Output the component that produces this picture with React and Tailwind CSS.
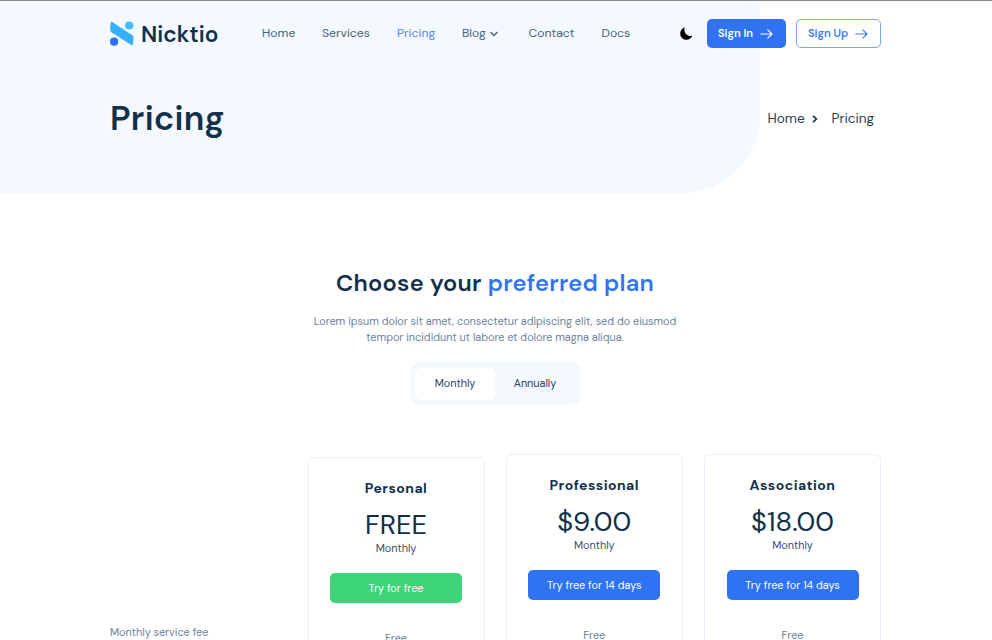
import React from "react";

const NAV = [
  { label: "Home", box: "w-[60px]" },
  { label: "Services", box: "w-[75px]" },
  { label: "Pricing", box: "w-[65px]", text: "text-[#4a86f7]" },
  { label: "Blog", box: "w-[66.5px]", menu: true },
  { label: "Contact", box: "w-[73px]" },
  { label: "Docs", box: "w-[40px]" },
];

const PLANS = [
  { name: "Personal", price: "FREE", cta: "Try for free", card: "mt-[3px]", button: "bg-[#3dd47a]" },
  { name: "Professional", price: "$9.00", cta: "Try free for 14 days", card: "", button: "bg-[#2f73f2]" },
  { name: "Association", price: "$18.00", cta: "Try free for 14 days", card: "", button: "bg-[#2f73f2]" },
];

function Logo() {
  return (
    <svg width="24" height="25" viewBox="0 0 24 25" className="block shrink-0">
      <path d="M1.4 .5 22.4 14.2C23.3 14.8 23.4 15.5 23.4 17c0 3-.3 6-1 7.7L1.6 11.2C.4 10.4.2 9.4.2 7.6.2 4.8.5 2.2 1.4.5Z" fill="#35b0fb" />
      <circle cx="19.2" cy="4.5" r="4.1" fill="#3fbdfd" />
      <circle cx="4.1" cy="20.7" r="4.1" fill="#2f6ff5" />
    </svg>
  );
}

function Arrow() {
  return (
    <svg width="13" height="10" viewBox="0 0 13 10" fill="none" stroke="currentColor" strokeWidth="1.1" strokeLinecap="round" strokeLinejoin="round">
      <path d="M.8 5h11.2M7.8.9 12 5 7.8 9.1" />
    </svg>
  );
}

function Header() {
  return (
    <header className="ml-[110px] flex h-[65px] w-[771px] items-center">
      <div className="flex w-[152px] items-center">
        <Logo />
        <span className="mt-[2px] ml-[7px] text-[22.6px] leading-7 font-semibold text-[#12304b]">Nicktio</span>
      </div>
      <nav className="mb-[2px] flex w-[418px] text-[12.2px] leading-5 text-[#476079]">
        {NAV.map((item) => (
          <a key={item.label} className={`flex shrink-0 items-center ${item.box}`}>
            <span className={item.text}>{item.label}</span>
            {item.menu && (
              <svg width="8" height="6" viewBox="0 0 8 6" className="mt-[3px] ml-[4px]" fill="none" stroke="currentColor" strokeWidth="1.4">
                <path d="M.6 1 4 4.4 7.4 1" />
              </svg>
            )}
          </a>
        ))}
      </nav>
      <svg width="13" height="13" viewBox="0 0 13 13" className="mb-px shrink-0">
        <path d="M4.9.3C1.9 1.2.2 3.7.2 6.4c0 3.5 2.7 6.3 6.2 6.3 2.8 0 5.1-1.7 5.9-4.2-.9.4-1.8.5-2.8.4C5.8 8.4 3.2 4.3 4.9.3Z" fill="#000" />
      </svg>
      <a className="ml-[14px] flex h-[29px] w-[79px] shrink-0 items-center justify-between rounded-[5px] bg-[#2f73f2] pr-[13px] pl-[11px] text-[11.1px] font-semibold whitespace-nowrap text-white">
        <span>Sign In</span>
        <Arrow />
      </a>
      <a className="ml-[10px] flex h-[29px] w-[85px] shrink-0 items-center justify-between rounded-[5px] border border-[#78a6f8] bg-white pr-[12px] pl-[11px] text-[11.1px] font-semibold whitespace-nowrap text-[#3c7af4]">
        <span>Sign Up</span>
        <Arrow />
      </a>
    </header>
  );
}

function Hero() {
  return (
    <section className="relative h-[193px] border-t border-[#828a91]">
      <div className="absolute top-0 left-0 h-[192px] w-[760px] rounded-br-[78px] bg-[#f3f9fe]" />
      <div className="relative">
        <Header />
        <div className="mt-[28px] ml-[110px] flex h-[50px] w-[771px] items-center">
          <h1 className="w-[657.5px] text-[34px] leading-[50px] font-semibold tracking-[0.3px] text-[#12304b]">
            <span>Pricing</span>
          </h1>
          <div className="flex items-center text-[13.6px] leading-5 text-[#1f3d59]">
            <span className="w-[44.5px]">Home</span>
            <svg width="6" height="8" viewBox="0 0 6 8" className="mr-[13.5px] shrink-0" fill="none" stroke="#12304b" strokeWidth="1.7">
              <path d="M1 .8 4.4 4 1 7.2" />
            </svg>
            <span>Pricing</span>
          </div>
        </div>
      </div>
    </section>
  );
}

function PlanCard({ plan }) {
  return (
    <article className={`flex h-[240px] w-[177px] shrink-0 flex-col items-center rounded-[6px] border border-[#e6f0fd] bg-white whitespace-nowrap ${plan.card}`}>
      <h3 className="mt-[20px] text-[14px] leading-5 font-bold tracking-[0.45px] text-[#12304b]">
        <span>{plan.name}</span>
      </h3>
      <p className="mt-[9px] text-[27.4px] leading-9 text-[#12304b]">
        <span>{plan.price}</span>
      </p>
      <p className="mt-[-3px] text-[10.83px] leading-4 text-[#34506a]">
        <span>Monthly</span>
      </p>
      <button className={`mt-[17px] h-[30px] w-[132px] rounded-[5px] text-[10.83px] leading-[30px] text-white ${plan.button}`}>
        <span>{plan.cta}</span>
      </button>
      <p className="mt-[27px] text-[10.83px] leading-4 text-[#6b829b]">
        <span>Free</span>
      </p>
    </article>
  );
}

export default function App() {
  return (
    <main className="h-[640px] w-[992px] overflow-hidden bg-white font-['DM_Sans','Inter',sans-serif]">
      <Hero />
      <section className="mt-[72px] ml-[109.5px] flex w-[771px] flex-col items-center">
        <h2 className="text-[23.6px] leading-9 font-semibold tracking-[0.25px] whitespace-nowrap text-[#12304b]">
          <span>Choose your </span>
          <span className="text-[#3074f4]">preferred plan</span>
        </h2>
        <p className="mt-[12px] text-center text-[10.84px] leading-4 whitespace-nowrap text-[#6b829b]">
          <span>Lorem ipsum dolor sit amet, consectetur adipiscing elit, sed do eiusmod</span>
          <br />
          <span>tempor incididunt ut labore et dolore magna aliqua.</span>
        </p>
        <div className="mt-[17px] flex h-[43px] w-[170px] items-center rounded-[8px] bg-[#f3f9fe] p-[5px] text-[10.83px] text-[#24425e]">
          <button className="h-[32px] w-[80px] rounded-[7px] bg-white">Monthly</button>
          <button className="h-[32px] w-[80px]">Annually</button>
        </div>
      </section>
      <section className="mt-[49px] ml-[110px] flex w-[771px] justify-between">
        <p className="mt-[170px] w-[160px] text-[10.83px] leading-4 text-[#6b829b]">
          <span>Monthly service fee</span>
        </p>
        <div className="flex w-[573.5px] justify-between">
          {PLANS.map((plan) => (
            <PlanCard key={plan.name} plan={plan} />
          ))}
        </div>
      </section>
    </main>
  );
}
